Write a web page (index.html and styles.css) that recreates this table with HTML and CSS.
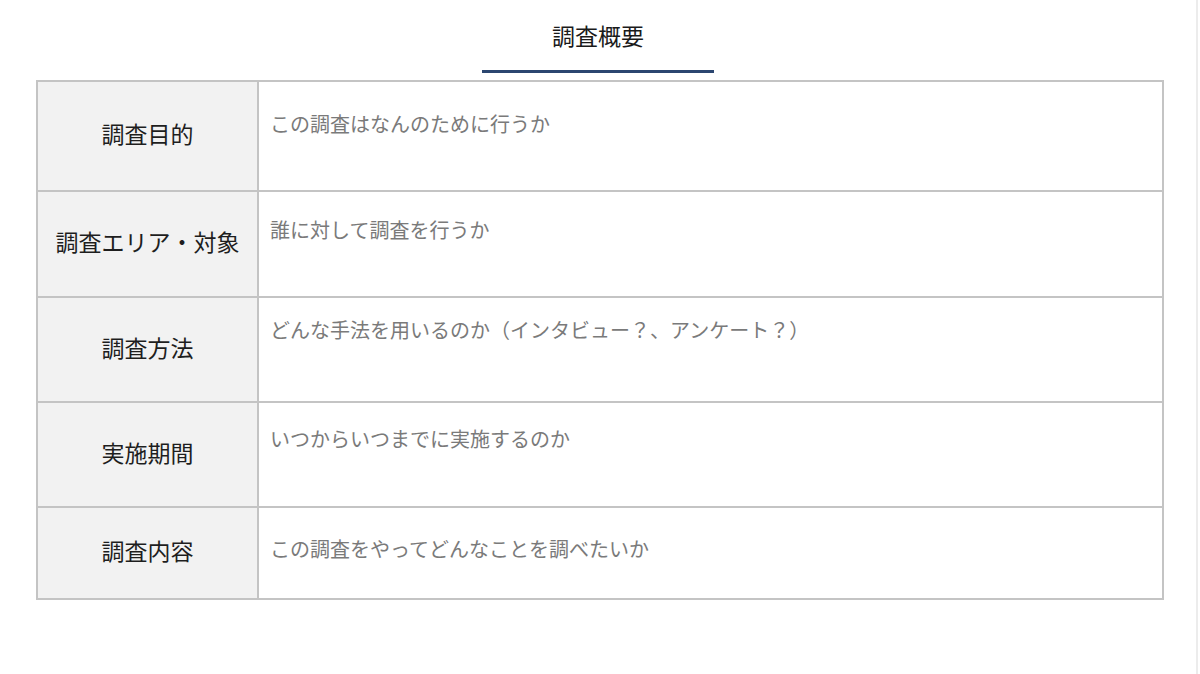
FILE: index.html
```html
<!DOCTYPE html>
<html lang="ja">
<head>
<meta charset="utf-8">
<link rel="stylesheet" href="styles.css">
</head>
<body>
<div class="page">
  <header class="head">
    <h1 class="title">調査概要</h1>
    <div class="underline"></div>
  </header>
  <table class="summary">
    <tr class="r1"><th>調査目的</th><td>この調査はなんのために行うか</td></tr>
    <tr class="r2"><th>調査エリア・対象</th><td>誰に対して調査を行うか</td></tr>
    <tr class="r3"><th>調査方法</th><td>どんな手法を用いるのか（インタビュー？、アンケート？）</td></tr>
    <tr class="r4"><th>実施期間</th><td>いつからいつまでに実施するのか</td></tr>
    <tr class="r5"><th>調査内容</th><td>この調査をやってどんなことを調べたいか</td></tr>
  </table>
</div>
</body>
</html>
```
FILE: styles.css
```css
html, body {
  margin: 0;
  padding: 0;
  background: #ffffff;
}
body {
  font-family: "Noto Sans CJK JP", "Noto Sans", sans-serif;
  color: #222;
}
.page {
  width: 1198px;
  height: 674px;
  border-right: 2px solid #ececec;
  box-sizing: border-box;
  overflow: hidden;
}
.head {
  display: flex;
  flex-direction: column;
  align-items: center;
  padding-top: 18px;
}
.title {
  margin: 0;
  font-size: 23px;
  font-weight: 400;
  line-height: 34px;
  color: #1a1a1a;
}
.underline {
  width: 232px;
  height: 3px;
  background: #2b4670;
  margin-top: 18px;
}
.summary {
  margin: 7px 0 0 36px;
  width: 1128px;
  border-collapse: collapse;
  border: 2px solid #c4c4c4;
}
.summary th,
.summary td {
  border: 2px solid #c4c4c4;
  padding: 0;
}
.summary th {
  width: 219px;
  background: #f2f2f2;
  font-size: 23px;
  font-weight: 400;
  color: #1e1e1e;
  text-align: center;
  vertical-align: middle;
  padding-bottom: 6px;
}
.summary td {
  font-size: 20px;
  color: #7a7a7a;
  text-align: left;
  vertical-align: top;
  padding-left: 11px;
  line-height: 28px;
}
.r1 { height: 110px; }
.r2 { height: 106px; }
.r3 { height: 105px; }
.r4 { height: 105px; }
.r5 { height: 92px; }
.r1 td { padding-top: 28px; }
.r2 td { padding-top: 24px; }
.r3 td { padding-top: 18px; }
.r4 td { padding-top: 22px; }
.r5 td { padding-top: 27px; }
```
